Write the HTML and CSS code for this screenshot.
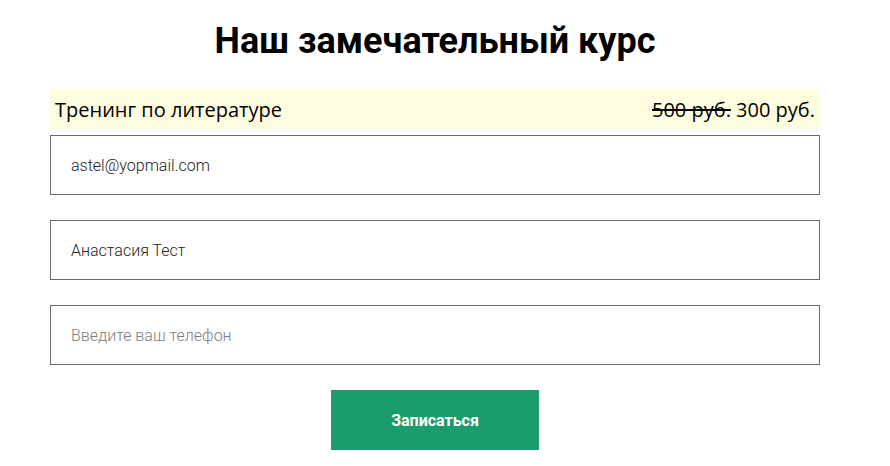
FILE: index.html
```html
<!DOCTYPE html>
<html lang="ru">
<head>
	<meta charset="UTF-8">
	<meta name="viewport" content="width=device-width, initial-scale=1.0">
	<title>Наш замечательный курс</title>

	<link rel="stylesheet" href="styles.css">
</head>
<body>
	<section class="course">
		<h1 class="course-title">Наш замечательный курс</h1>

		<div class="course-offer">
			<span class="offer-name">Тренинг по литературе</span>
			<span class="offer-price"><s>500 руб.</s> 300 руб.</span>
		</div>

		<form class="signup-form">
			<input class="field" type="email" value="astel@yopmail.com">
			<input class="field" type="text" value="Анастасия Тест">
			<input class="field" type="tel" placeholder="Введите ваш телефон">
			<button class="submit-btn" type="button">Записаться</button>
		</form>
	</section>
</body>
</html>
```

FILE: styles.css
```css
*,
*::before,
*::after {
	margin: 0;
	padding: 0;
	box-sizing: border-box;
}

:root {
	--text-dark: #000;
	--offer-bg: #fffde0;
	--border-grey: #6b6b6b;
	--accent-green: #1b9c6b;
}

body {
	background: #fff;
	color: var(--text-dark);
	font-family: "Open Sans", sans-serif;
}

/**
* Course block
*/
.course {
	width: 770px;
	margin-left: 50px;
	padding-top: 17px;
}

.course-title {
	font-family: Roboto, sans-serif;
	font-size: 36px;
	font-weight: 700;
	line-height: 48px;
	text-align: center;
}

/* offer line */
.course-offer {
	margin-top: 24px;
	height: 40px;
	padding: 0 5px;
	display: flex;
	align-items: center;
	justify-content: space-between;
	background: var(--offer-bg);
	font-size: 20px;
}

.offer-price s {
	text-decoration-thickness: 2px;
}

/* form */
.signup-form {
	margin-top: 6px;
	display: flex;
	flex-direction: column;
	align-items: center;
	gap: 25px;
}

.field {
	width: 100%;
	height: 60px;
	padding: 0 20px;
	border: 1px solid var(--border-grey);
	border-radius: 0;
	font-family: Roboto, sans-serif;
	font-size: 16px;
	font-weight: 300;
	color: #222;
	outline: none;
}

.field::placeholder {
	color: #7d7d7d;
}

.submit-btn {
	width: 208px;
	height: 60px;
	border: none;
	background: var(--accent-green);
	color: #fff;
	font-family: Roboto, sans-serif;
	font-size: 16px;
	font-weight: 700;
	cursor: pointer;
}
```
